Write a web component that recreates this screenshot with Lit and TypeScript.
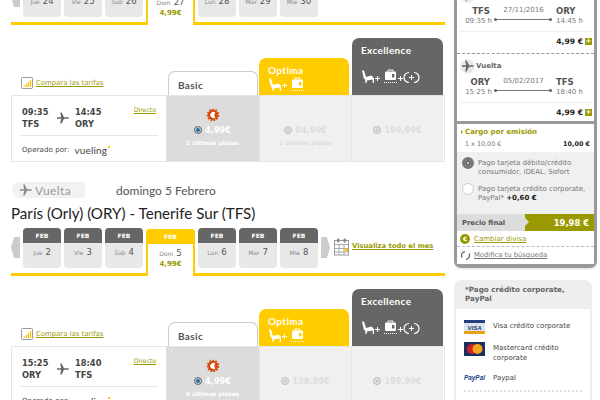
import { LitElement, html, css, svg } from "lit";
import { customElement } from "lit/decorators.js";

const seat = svg`<path d="M1 1.5 L3 1.5 L5 8 L10.5 6.5 L13 9 L13 14 L11.8 14 L11.6 10.5 L6 11.5 L5.5 14 L4.4 14 L4.2 10.5 L2.8 9.5 Z" fill="currentColor"/>`;
const plus = (x: number, y: number) => svg`<path d="M${x} ${y + 2.5}h5M${x + 2.5} ${y}v5" stroke="currentColor" stroke-width="1" fill="none"/>`;
const bag = (x: number, accent: string) => svg`
  <rect x="${x}" y="2.5" width="11" height="8.5" rx="1" fill="currentColor"/>
  <path d="M${x + 3} 2.5v-1.5h5v1.5" stroke="currentColor" fill="none"/>
  <rect x="${x + 7}" y="5" width="2.4" height="3.4" fill="${accent}"/>
  <path d="M${x - 1} 13.5h13" stroke="currentColor" stroke-dasharray="1 1" fill="none"/>`;
const fareIconsOptima = html`<svg class="fi" width="46" height="16" viewBox="0 0 46 16">${seat}${plus(14, 6)}${bag(24, "#fc0")}</svg>`;
const fareIconsExcellence = html`<svg class="fi" width="60" height="16" viewBox="0 0 60 16">${seat}${plus(14, 7)}${bag(24, "#666")}${plus(37, 7)}
  <path d="M48 3.5a5 5 0 0 0 0 10M53 3.5a5 5 0 0 1 0 10" stroke="currentColor" fill="none" stroke-width="1.2"/>${plus(48, 6)}</svg>`;

const sun = html`<svg class="sun" width="14" height="14" viewBox="0 0 14 14">
  <circle cx="7" cy="7" r="5" fill="#d8480a" stroke="#d8480a" stroke-width="2.6" stroke-dasharray="1.6 1.2"/>
  <path d="M9.4 4.6a3.1 3.1 0 1 0 0 4.8a3.6 3.6 0 0 1 0-4.8z" fill="#fff"/></svg>`;

const plane = html`<svg width="12" height="12" viewBox="0 0 12 12"><path d="M0 5.2h4.2L3.2 .5h1.4L7 5.2h3.4c2 0 2 1.6 0 1.6H7L4.6 11.5H3.2l1-4.7H0L-.2 6z" fill="#666"/></svg>`;

const compareIcon = html`<svg width="12" height="12" viewBox="0 0 12 12"><rect x=".5" y=".5" width="11" height="11" rx="1" fill="#fff" stroke="#999"/>
  <path d="M2.5 10V8.5h1.3V10zM4.6 10V7h1.3v3zM6.7 10V5h1.3v5zM8.8 10V3h1.3v7z" fill="#f5c400"/></svg>`;

const calIcon = html`<svg width="16" height="18" viewBox="0 0 16 18"><rect x=".5" y="2.5" width="14" height="14.5" fill="#fff" stroke="#999"/>
  <path d="M.5 6.5h14M.5 10.5h14M.5 14h14M5 6.5V17M10 6.5V17" stroke="#aaa" fill="none"/>
  <rect x="3" y=".5" width="2.5" height="4" rx="1" fill="#888"/><rect x="9.5" y=".5" width="2.5" height="4" rx="1" fill="#888"/>
  <rect x="11" y="10.5" width="3" height="3" fill="#f5c400"/></svg>`;

const radio = (on: boolean) => html`<span class="radio ${on ? "on" : ""}"></span>`;

type Day = { d: string; n: string; m: string; sel?: boolean; price?: string };
type Fare = { price: string; note?: string };
type Sec = {
  label: string; date: string; title: string; days: Day[]; month: boolean;
  dep: string; arr: string; from: string; to: string; basic: Fare; optima: Fare; excellence: Fare;
};

const sections: Sec[] = [
  {
    label: "Ida", date: "domingo 27 Noviembre", title: "Tenerife Sur (TFS) - París (Orly) (ORY)", month: false,
    days: [
      { d: "Jue", n: "24", m: "NOV" }, { d: "Vie", n: "25", m: "NOV" }, { d: "Sab", n: "26", m: "NOV" },
      { d: "Dom", n: "27", m: "NOV", sel: true, price: "4,99€" },
      { d: "Lun", n: "28", m: "NOV" }, { d: "Mar", n: "29", m: "NOV" }, { d: "Mie", n: "30", m: "NOV" },
    ],
    dep: "09:35", arr: "14:45", from: "TFS", to: "ORY",
    basic: { price: "4,99€", note: "2 últimas plazas" }, optima: { price: "84,99€", note: "2 últimas plazas" }, excellence: { price: "199,99€" },
  },
  {
    label: "Vuelta", date: "domingo 5 Febrero", title: "París (Orly) (ORY) - Tenerife Sur (TFS)", month: true,
    days: [
      { d: "Jue", n: "2", m: "FEB" }, { d: "Vie", n: "3", m: "FEB" }, { d: "Sab", n: "4", m: "FEB" },
      { d: "Dom", n: "5", m: "FEB", sel: true, price: "4,99€" },
      { d: "Lun", n: "6", m: "FEB" }, { d: "Mar", n: "7", m: "FEB" }, { d: "Mie", n: "8", m: "FEB" },
    ],
    dep: "15:25", arr: "18:40", from: "ORY", to: "TFS",
    basic: { price: "4,99€", note: "4 últimas plazas" }, optima: { price: "129,99€" }, excellence: { price: "199,99€" },
  },
];

@customElement("app-root")
export class AppRoot extends LitElement {
  static styles = css`
    :host { display: block; width: 600px; height: 400px; overflow: hidden; background: #fff; font-family: "DejaVu Sans", sans-serif; font-size: 7px; color: #555; }
    * { box-sizing: border-box; }
    a { color: inherit; }
    .page { display: flex; align-items: flex-start; height: 400px; overflow: hidden; }
    .main { width: 434px; margin-left: 11px; margin-top: -69px; flex: none; }
    .section { height: 251px; }
    .vhead { display: flex; align-items: center; height: 16px; }
    .pill { width: 73px; height: 16px; margin-left: 1px; background: #f2f2f2; border-radius: 8px 0 0 8px; display: flex; align-items: center; gap: 3px; padding-left: 8px; font: 12px Lato, sans-serif; color: #999; letter-spacing: .4px; }
    .vdate { margin-left: 31px; font: 12px Lato, sans-serif; color: #555; }
    .title { height: 30px; display: flex; align-items: center; font: 15.15px Lato, sans-serif; color: #222; white-space: nowrap; }
    .cal { display: flex; height: 48px; border-bottom: 3px solid #fc0; gap: 3px; align-items: flex-start; }
    .arrow { width: 9px; height: 21px; margin-top: 9px; background: #ccc; flex: none; }
    .arrow.l { clip-path: polygon(100% 0, 100% 100%, 35% 100%, 0 50%, 35% 0); }
    .arrow.r { clip-path: polygon(0 0, 0 100%, 65% 100%, 100% 50%, 65% 0); }
    .day { width: 38px; height: 40px; border-radius: 4px; background: #e8e8e8; overflow: hidden; flex: none; }
    .day .m { height: 15px; background: #666; color: #fff; font-size: 6px; font-weight: bold; display: flex; align-items: center; justify-content: center; }
    .day .b { display: flex; justify-content: center; align-items: baseline; gap: 3px; color: #888; font-size: 6px; padding-top: 4px; }
    .day .b b { font: 400 8.5px "DejaVu Sans", sans-serif; color: #555; }
    .day.sel { width: 49px; height: 47px; margin-top: 1px; background: #fff; border: solid #fc0; border-width: 0 2px; border-radius: 4px 4px 0 0; overflow: visible; }
    .day.sel .m { background: #fc0; margin: 0 -2px; border-radius: 4px 4px 0 0; }
    .day.sel .b { padding-top: 4px; }
    .day.sel .p { text-align: center; color: #9a9a00; font-weight: bold; font-size: 7px; margin-top: 2px; }
    .month { display: flex; align-items: center; gap: 2px; margin-left: 1px; margin-top: 10px; color: #9a9a00; font-weight: bold; font-size: 6.8px; }
    .month a { margin-top: -3px; }
    .fhead { display: flex; align-items: flex-end; height: 62px; margin-top: 8px; }
    .cmp { width: 157px; display: flex; gap: 3px; align-items: center; padding-left: 10px; padding-bottom: 6px; color: #9a9a00; font-size: 6.9px; flex: none; }
    .tab { border-radius: 7px 7px 0 0; flex: none; font: 700 10px Lato, sans-serif; letter-spacing: .35px; }
    .tab.basic { width: 90px; height: 24px; border: 1px solid #ccc; border-bottom: 0; color: #555; padding: 7px 9px; background: #fff; }
    .tab.optima { width: 90px; height: 37px; margin-left: 1px; background: #fc0; color: #fff; padding: 6px 9px 0; }
    .tab.exc { width: 91px; height: 57px; margin-left: 3px; background: #666; color: #fff; padding: 6px 9px 0; }
    .fi { display: block; }
    .tab.optima .fi { margin-top: 1px; }
    .tab.exc .fi { margin-top: 13px; }
    .box { display: flex; height: 67px; border: 1px solid #e6e6e6; }
    .info { width: 154px; flex: none; padding: 0 8px; }
    .times { height: 40px; display: grid; grid-template-columns: 35px 18px 1fr auto; padding: 10px 2px 0 2px; border-bottom: 1px solid #e6e6e6; font: 700 8.3px/12px "DejaVu Sans", sans-serif; color: #444; }
    .times svg { margin-top: 6px; }
    .dir { font-size: 6.2px; font-weight: 400; color: #9a9a00; line-height: 8px; }
    .op { display: flex; align-items: center; padding: 8px 2px; font-size: 7px; color: #444; letter-spacing: .1px; }
    .vue { font: 400 10px Lato, sans-serif; color: #444; letter-spacing: .15px; position: relative; margin-left: 5px; }
    .vue::after { content: ""; position: absolute; right: -3px; top: 2px; width: 2px; height: 2px; background: #fc0; }
    .cell { width: 92px; flex: none; display: flex; flex-direction: column; align-items: center; background: #f0f0f0; border-left: 1px solid #e6e6e6; color: #ddd; padding-top: 28px; font-weight: bold; }
    .cell.sel { background: #dcdcdc; color: #fff; border-left: 0; padding-top: 12px; width: 93px; }
    .sun { display: block; margin-bottom: 2px; }
    .pr { display: flex; align-items: center; gap: 3px; font-size: 8px; letter-spacing: .1px; height: 12px; }
    .note { font-size: 5.8px; margin-top: 4px; }
    .radio { width: 8px; height: 8px; border-radius: 50%; background: #ccc; border: 1px solid #bbb; box-shadow: inset 0 0 0 1px #eee; display: inline-block; flex: none; }
    .radio.on { background: #1f6f98; border-color: #777; box-shadow: inset 0 0 0 1px #ddd; }

    .side { width: 143px; margin-left: 9px; margin-top: -17px; flex: none; }
    .frame { background: #999; padding: 0 3px 4px 3px; border-radius: 0 0 7px 7px; width: 143px; box-shadow: 0 2px 0 #eee; }
    .leg { background: #fff; height: 71px; padding: 4px 3px 0; border-bottom: 1px dashed #999; }
    .leg.last { height: 67px; border-bottom: 0; }
    .lh { height: 16px; display: flex; align-items: center; gap: 1px; font-weight: bold; color: #666; font-size: 7px; }
    .circ { width: 15px; height: 15px; border-radius: 50%; background: #e8e8e8; display: flex; align-items: center; justify-content: center; box-shadow: inset 0 0 0 1px #f4f4f4; }
    .route { display: flex; height: 22px; margin-top: 3px; }
    .rl { width: 31px; margin-left: 1px; text-align: right; }
    .rr { margin-left: 1px; }
    .ap { font: 700 8.5px/11px "DejaVu Sans", sans-serif; color: #555; height: 11px; }
    .rl .ap { padding-right: 2px; }
    .tm { font-size: 7px; line-height: 9px; color: #777; }
    .rm { width: 63px; text-align: center; font-size: 7px; color: #777; line-height: 10px; margin-top: -1px; }
    .ln { height: 1px; background: #777; margin: 4px 3px 0 2px; position: relative; }
    .ln::before, .ln::after { content: ""; position: absolute; top: -1px; width: 3px; height: 3px; border-radius: 50%; background: #666; }
    .ln::before { left: 0; } .ln::after { right: 0; }
    .lp { margin: 3px -1px 0 0; border-top: 1px solid #eee; display: flex; justify-content: flex-end; align-items: center; gap: 2px; height: 21px; font-weight: bold; font-size: 7.6px; color: #222; padding-bottom: 1px; }
    .pb { width: 7px; height: 7px; background: #9a9a00; color: #fff; font-size: 7px; line-height: 6px; text-align: center; }
    .pay { background: #fff; margin-top: 3px; height: 140px; }
    .cargo { height: 28px; padding: 3px 4px 0 8px; }
    .ct { font: 700 7px/10px "DejaVu Sans", sans-serif; color: #9a9a00; position: relative; }
    .ct::before { content: ""; position: absolute; left: -4px; top: 3px; border: 2px solid transparent; border-left-color: #9a9a00; }
    .cr { display: flex; justify-content: space-between; font-size: 6.4px; color: #777; margin-top: 2px; line-height: 10px; }
    .cr b { color: #222; }
    .opts { height: 62px; background: #f0f0f0; padding: 5px 5px; display: flex; flex-direction: column; gap: 8px; }
    .opt { display: flex; gap: 4px; font-size: 7px; line-height: 9px; color: #777; height: 18px; }
    .opt span:last-child { margin-top: 1.5px; }
    .rb { width: 12px; height: 12px; border-radius: 50%; background: #fff; border: 1px solid #ccc; flex: none; }
    .rb.on { border: 3px solid #777; box-shadow: inset 0 0 0 2px #666; background: #eee; }
    .opt b { color: #222; }
    .total { display: flex; height: 17px; font-weight: bold; }
    .tl { width: 68px; background: #dcdcdc; display: flex; align-items: center; padding-left: 5px; color: #555; font-size: 6.8px; }
    .tr { flex: 1; background: #9a9a00; color: #fff; display: flex; align-items: center; justify-content: flex-end; padding-right: 5px; font-size: 8.4px; position: relative; }
    .tr::before { content: ""; position: absolute; left: 0; top: 4px; border: 4px solid transparent; border-left-color: #dcdcdc; }
    .lnk { display: flex; align-items: center; gap: 3px; padding-left: 3px; height: 16px; font-size: 7px; }
    .lnk.d { color: #9a9a00; border-bottom: 1px dashed #bbb; }
    .lnk.m { color: #777; font-size: 6.8px; }
    .eu { width: 10px; height: 10px; border-radius: 50%; background: #9a9a00; color: #fff; font-size: 6px; display: flex; align-items: center; justify-content: center; font-weight: bold; margin-right: 1px; }
    .card { width: 138px; margin-top: 12px; border: solid #eee; border-width: 0 2px; border-radius: 8px 8px 0 0; height: 140px; }
    .ch { background: #eee; margin: 0 -2px; border-radius: 8px 8px 0 0; height: 29px; padding: 5px 11px; font: 700 7.2px/9px "DejaVu Sans", sans-serif; color: #666; }
    .rows { padding: 11px 8px 0 8px; }
    .pm { display: flex; gap: 8px; align-items: flex-start; font-size: 7px; line-height: 10px; color: #444; }
    .pm svg { flex: none; }
    .pm.v { height: 22px; }
    .pm.v span { margin-top: 1px; }
    .pm.mc { height: 31px; }
    .pm.mc span { margin-top: 1px; }
    .pm.pp { height: 10px; gap: 7px; }
    .ppl { width: 22px; font: italic 700 6.4px/10px "Liberation Sans", sans-serif; color: #1b3f8b; flex: none; }
    .dots { margin: 7px 0 0 0; height: 2px; border-top: 2px dotted #ddd; }
  `;

  private renderSection(s: Sec) {
    return html`<div class="section">
      <div class="vhead">
        <div class="pill"><svg width="12" height="12" viewBox="0 0 12 12"><path d="M0 5.2h4.2L3.2 .5h1.4L7 5.2h3.4c2 0 2 1.6 0 1.6H7L4.6 11.5H3.2l1-4.7H0z" fill="#888"/></svg>${s.label}</div>
        <div class="vdate">${s.date}</div>
      </div>
      <div class="title">${s.title}</div>
      <div class="cal">
        <div class="arrow l"></div>
        ${s.days.map((d) => html`<div class="day ${d.sel ? "sel" : ""}">
          <div class="m">${d.m}</div>
          <div class="b">${d.d} <b>${d.n}</b></div>
          ${d.price ? html`<div class="p">${d.price}</div>` : ""}
        </div>`)}
        ${s.month ? html`<div class="arrow r"></div>
        <div class="month">${calIcon}<a href="#">Visualiza todo el mes</a></div>` : ""}
      </div>
      <div class="fhead">
        <div class="cmp">${compareIcon}<a href="#">Compara las tarifas</a></div>
        <div class="tab basic">Basic</div>
        <div class="tab optima">Optima${fareIconsOptima}</div>
        <div class="tab exc">Excellence${fareIconsExcellence}</div>
      </div>
      <div class="box">
        <div class="info">
          <div class="times">
            <div>${s.dep}<br />${s.from}</div>
            ${plane}
            <div>${s.arr}<br />${s.to}</div>
            <a class="dir" href="#">Directo</a>
          </div>
          <div class="op">Operado por: <span class="vue">vueling</span></div>
        </div>
        <div class="cell sel">${sun}<div class="pr">${radio(true)}${s.basic.price}</div><div class="note">${s.basic.note}</div></div>
        <div class="cell"><div class="pr">${radio(false)}${s.optima.price}</div>${s.optima.note ? html`<div class="note">${s.optima.note}</div>` : ""}</div>
        <div class="cell"><div class="pr">${radio(false)}${s.excellence.price}</div></div>
      </div>
    </div>`;
  }

  private renderLeg(a: string, b: string, date: string, t1: string, t2: string, label: string, last: boolean) {
    return html`<div class="leg ${last ? "last" : ""}">
      <div class="lh"><span class="circ">${plane}</span>${label}</div>
      <div class="route">
        <div class="rl"><div class="ap">${a}</div><div class="tm">${t1}</div></div>
        <div class="rm">${date}<div class="ln"></div></div>
        <div class="rr"><div class="ap">${b}</div><div class="tm">${t2}</div></div>
      </div>
      <div class="lp">4,99 € <span class="pb">+</span></div>
    </div>`;
  }

  render() {
    return html`<div class="page">
      <div class="main">${sections.map((s) => this.renderSection(s))}</div>
      <div class="side">
        <div class="frame">
          ${this.renderLeg("TFS", "ORY", "27/11/2016", "09:35 h", "14:45 h", "Ida", false)}
          ${this.renderLeg("ORY", "TFS", "05/02/2017", "15:25 h", "18:40 h", "Vuelta", true)}
          <div class="pay">
            <div class="cargo">
              <div class="ct">Cargo por emisión</div>
              <div class="cr"><span>1 x 10,00 €</span><b>10,00 €</b></div>
            </div>
            <div class="opts">
              <div class="opt"><span class="rb on"></span><span>Pago tarjeta débito/crédito consumidor, iDEAL, Sofort</span></div>
              <div class="opt"><span class="rb"></span><span>Pago tarjeta crédito corporate, PayPal* <b>+0,60 €</b></span></div>
            </div>
            <div class="total"><div class="tl">Precio final</div><div class="tr">19,98 €</div></div>
            <div class="lnk d"><span class="eu">€</span><a href="#">Cambiar divisa</a></div>
            <div class="lnk m"><svg width="11" height="11" viewBox="0 0 11 11"><path d="M2 7.5A4 4 0 0 1 5 1.6M9 3.5A4 4 0 0 1 6 9.4" stroke="#666" stroke-width="1.3" fill="none"/></svg><a href="#">Modifica tu búsqueda</a></div>
          </div>
        </div>
        <div class="card">
          <div class="ch">*Pago crédito corporate,<br />PayPal</div>
          <div class="rows">
            <div class="pm v"><svg width="21" height="14" viewBox="0 0 21 14"><rect width="21" height="14" fill="#dfe3ea"/><rect y="0" width="21" height="3" fill="#24407f"/><rect y="11" width="21" height="3" fill="#e6a317"/><text x="10.5" y="9.5" text-anchor="middle" font-size="6" font-weight="bold" font-style="italic" font-family="Liberation Sans" fill="#24407f">VISA</text></svg><span>Visa crédito corporate</span></div>
            <div class="pm mc"><svg width="21" height="14" viewBox="0 0 21 14"><rect width="21" height="14" fill="#1c2f5e"/><circle cx="8" cy="7" r="5" fill="#d8202c"/><circle cx="13.5" cy="7" r="5" fill="#f4a41c"/></svg><span>Mastercard crédito corporate</span></div>
            <div class="pm pp"><span class="ppl">PayPal</span><span>Paypal</span></div>
            <div class="dots"></div>
          </div>
        </div>
      </div>
    </div>`;
  }
}
